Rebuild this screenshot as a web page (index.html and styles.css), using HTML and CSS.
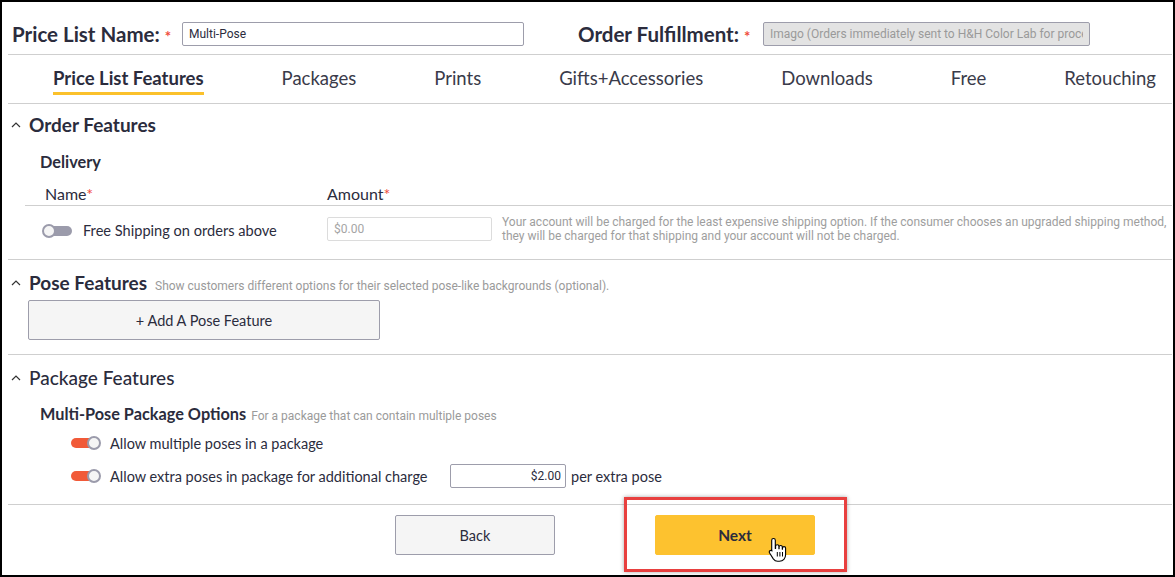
FILE: index.html
```html
<!DOCTYPE html>
<html lang="en">
<head>
    <meta charset="UTF-8">
    <meta name="viewport" content="width=device-width, initial-scale=1.0">
    <title>Price List</title>
    <link rel="stylesheet" href="styles.css">
</head>
<body>
<div class="frame">
    <!-- nombre y fulfillment -->
    <div class="top-row">
        <label class="big-label name-label" for="pl_name">Price List Name:<span class="req">*</span></label>
        <input type="text" id="pl_name" class="name-input" value="Multi-Pose">
        <label class="big-label fulfil-label" for="fulfil">Order Fulfillment:<span class="req">*</span></label>
        <input type="text" id="fulfil" class="fulfil-input" value="Imago (Orders immediately sent to H&amp;H Color Lab for processing)" readonly>
    </div>

    <nav class="tabs">
        <a class="tab active">Price List Features</a>
        <a class="tab">Packages</a>
        <a class="tab">Prints</a>
        <a class="tab">Gifts+Accessories</a>
        <a class="tab">Downloads</a>
        <a class="tab">Free</a>
        <a class="tab">Retouching</a>
    </nav>

    <section class="section order">
        <h2 class="sec-title"><svg class="chev" width="10" height="6" viewBox="0 0 10 6"><polyline points="1,5 5,1 9,5" fill="none" stroke="#333" stroke-width="1.2"/></svg>Order Features</h2>
        <h3 class="sub-title">Delivery</h3>
        <div class="cols">
            <span class="col-name">Name<span class="req">*</span></span>
            <span class="col-amount">Amount<span class="req">*</span></span>
        </div>
        <div class="ship-row">
            <div class="ship-name">
                <span class="toggle"><span class="knob"></span></span>
                Free Shipping on orders above
            </div>
            <input type="text" class="amount-input" placeholder="$0.00">
            <p class="help">Your account will be charged for the least expensive shipping option. If the consumer chooses an upgraded shipping method,<br>they will be charged for that shipping and your account will not be charged.</p>
        </div>
    </section>

    <section class="section pose">
        <h2 class="sec-title"><svg class="chev" width="10" height="6" viewBox="0 0 10 6"><polyline points="1,5 5,1 9,5" fill="none" stroke="#333" stroke-width="1.2"/></svg>Pose Features <small class="note">Show customers different options for their selected pose-like backgrounds (optional).</small></h2>
        <button class="btn add-pose">+ Add A Pose Feature</button>
    </section>

    <section class="section package">
        <h2 class="sec-title light"><svg class="chev" width="10" height="6" viewBox="0 0 10 6"><polyline points="1,5 5,1 9,5" fill="none" stroke="#333" stroke-width="1.2"/></svg>Package Features</h2>
        <h3 class="sub-title multi">Multi-Pose Package Options <small class="note">For a package that can contain multiple poses</small></h3>
        <div class="opt-row first">
            <span class="toggle on"><span class="knob"></span></span>
            Allow multiple poses in a package
        </div>
        <div class="opt-row">
            <span class="toggle on"><span class="knob"></span></span>
            <span class="opt-text">Allow extra poses in package for additional charge</span>
            <input type="text" class="extra-input" value="$2.00">
            <span class="per">per extra pose</span>
        </div>
    </section>

    <div class="footer">
        <button class="btn back">Back</button>
        <div class="next-wrap">
            <button class="btn next">Next</button>
            <svg class="cursor" width="20" height="26" viewBox="0 0 20 26">
                <path d="M5.5 1.5c1 0 1.8.8 1.8 1.8v8.2l.3-.1V9.3c0-1 .8-1.6 1.7-1.6s1.6.7 1.6 1.6v2.4h.2V10c0-.9.8-1.5 1.6-1.5s1.6.6 1.6 1.5v2.2h.2v-1.1c0-.9.7-1.5 1.5-1.5s1.6.6 1.6 1.5v6.6c0 3.6-2.4 6.6-6.2 6.6H9.6c-2 0-3.2-.9-4.3-2.4L1.6 16c-.6-.8-.4-1.8.3-2.3.7-.5 1.7-.4 2.2.3l-.4-.6 0 0V3.3c0-1 .8-1.8 1.8-1.8z" fill="#fff" stroke="#000" stroke-width="1.1" stroke-linejoin="round"/>
                <path d="M9.3 15v4.5M11.9 15v4.5M14.5 15v4.5" stroke="#000" stroke-width="1"/>
            </svg>
        </div>
    </div>
</div>
</body>
</html>
```

FILE: styles.css
```css
* {
    box-sizing: border-box;
}
body {
    margin: 0;
    font-family: Lato, "Noto Sans", sans-serif;
    color: #2b2c3d;
    background: #000;
}
.frame {
    height: 577px;
    border: 2px solid #000;
    background: #fff;
    overflow: hidden;
}
.req {
    color: #f04a3a;
    margin-left: 3px;
}

/* fila de arriba */
.top-row {
    display: flex;
    align-items: center;
    height: 53px;
    margin: 0 1px 0 6px;
    padding: 20px 0 8px 4px;
    border-bottom: 1px solid #cfcfcf;
}
.big-label {
    height: 24px;
    font-size: 20.5px;
    font-weight: 700;
    line-height: 24px;
    white-space: nowrap;
}
.big-label .req {
    font-size: 15px;
    line-height: 1;
    margin-left: 5px;
}
.name-label {
    width: 161px;
}
.fulfil-label {
    width: 176px;
    margin-left: 54px;
}
.name-input, .fulfil-input {
    height: 24px;
    border: 1px solid #9d9dab;
    border-radius: 2px;
    font-family: Roboto, sans-serif;
    font-size: 12px;
    padding: 0 6px;
    color: #2b2c3d;
}
.name-input {
    width: 342px;
    margin-left: 9px;
}
.fulfil-input {
    width: 327px;
    margin-left: 9px;
    background: #e3e3e3;
    color: #9a9a9a;
    outline: none;
}

/* tabs */
.tabs {
    display: flex;
    justify-content: space-between;
    height: 49px;
    margin: 0 1px 0 6px;
    padding: 0 16px 8px 45px;
    border-bottom: 1px solid #cfcfcf;
}
.tab {
    height: 40px;
    font-size: 18.5px;
    line-height: 22px;
    padding: 12px 0 3px;
    border-bottom: 3px solid transparent;
    color: #3a3b4a;
}
.tab.active {
    font-weight: 700;
    color: #2b2c3d;
    border-bottom-color: #fbc12b;
}

/* secciones */
.section {
    margin: 0 1px 0 6px;
    border-bottom: 1px solid #cfcfcf;
}
.sec-title {
    display: flex;
    align-items: baseline;
    height: 22px;
    margin: 0;
    font-size: 19px;
    line-height: 22px;
    font-weight: 700;
}
.sec-title.light {
    font-weight: 500;
}
.chev {
    align-self: center;
    margin: 0 8px 0 3px;
}
.note {
    font-family: Roboto, sans-serif;
    font-size: 12px;
    line-height: 14px;
    font-weight: 400;
    color: #9a9a9a;
    margin-left: 8px;
}
.sub-title {
    display: flex;
    align-items: baseline;
    height: 20px;
    margin: 0 0 0 32px;
    font-size: 16.3px;
    line-height: 20px;
    font-weight: 700;
}
.sub-title .note {
    margin-left: 5px;
}

.order {
    padding-top: 10px;
}
.order .sub-title {
    margin-top: 16px;
}
.cols {
    display: flex;
    height: 22px;
    margin: 12px 0 0 17px;
    padding: 0 0 2px 20px;
    border-bottom: 1px solid #cfcfcf;
    font-size: 16px;
    line-height: 20px;
}
.col-name {
    width: 282px;
}
.col-name .req, .col-amount .req {
    margin-left: 0;
}
.ship-row {
    display: flex;
    align-items: center;
    height: 53px;
    padding: 11px 0 18px 34px;
}
.ship-name {
    display: flex;
    align-items: center;
    width: 285px;
    font-size: 14.6px;
    margin-top: 3px;
}
.ship-name .toggle {
    margin-right: 10px;
}
.amount-input {
    width: 165px;
    height: 24px;
    border: 1px solid #dcdcdc;
    border-radius: 2px;
    padding: 0 6px;
    font-family: Roboto, sans-serif;
    font-size: 12px;
}
.amount-input::placeholder {
    color: #a5a5a5;
}
.help {
    margin: -2px 0 -2px 10px;
    font-family: Roboto, sans-serif;
    font-size: 12px;
    line-height: 14px;
    color: #9e9e9e;
    white-space: nowrap;
}

/* toggle */
.toggle {
    position: relative;
    display: inline-block;
    width: 31px;
    height: 14px;
    flex: none;
}
.toggle::before {
    content: "";
    position: absolute;
    left: 1px;
    right: 1px;
    top: 2px;
    height: 10px;
    border-radius: 5px;
    background: #9b9bab;
}
.toggle .knob {
    position: absolute;
    left: 0;
    top: 0;
    width: 14px;
    height: 14px;
    border-radius: 50%;
    background: #f5f5f5;
    border: 2px solid #9b9bab;
}
.toggle.on::before {
    background: #f15a38;
}
.toggle.on .knob {
    left: auto;
    right: 0;
}

.pose {
    padding: 12px 0 14px;
}
.btn {
    font-family: Lato, sans-serif;
    font-size: 14.5px;
    color: #2b2c3d;
    background: #f5f5f5;
    border: 1px solid #9d9dab;
    border-radius: 2px;
    height: 40px;
    cursor: pointer;
}
.add-pose {
    display: block;
    width: 352px;
    margin: 6px 0 0 20px;
}

.package {
    padding: 12px 0 16px;
}
.package .sub-title {
    margin-top: 15px;
}
.opt-row {
    display: flex;
    align-items: center;
    height: 24px;
    margin: 9px 0 0 62px;
    font-size: 14.5px;
}
.opt-row.first {
    margin-top: 7px;
}
.opt-row .toggle {
    margin-right: 9px;
}
.opt-text {
    width: 340px;
}
.extra-input {
    width: 116px;
    height: 24px;
    border: 1px solid #9d9dab;
    border-radius: 2px;
    text-align: right;
    padding: 0 4px;
    font-family: Roboto, sans-serif;
    font-size: 12px;
    color: #2b2c3d;
}
.per {
    margin-left: 5px;
}

/* botones de abajo */
.footer {
    display: flex;
    justify-content: center;
    gap: 100px;
    padding: 10px 0 0 35px;
}
.back, .next {
    width: 160px;
}
.next-wrap {
    position: relative;
}
.next-wrap::before {
    content: "";
    position: absolute;
    top: -18px;
    left: -31px;
    right: -32px;
    bottom: -17px;
    border: 3px solid #e8403f;
    box-shadow: 0 0 4px rgba(0,0,0,0.35);
}
.next {
    position: relative;
    font-size: 15.5px;
    font-weight: 700;
    background: #fdc22f;
    border-color: #fdc22f;
}
.cursor {
    position: absolute;
    left: 113px;
    top: 22px;
}
```
